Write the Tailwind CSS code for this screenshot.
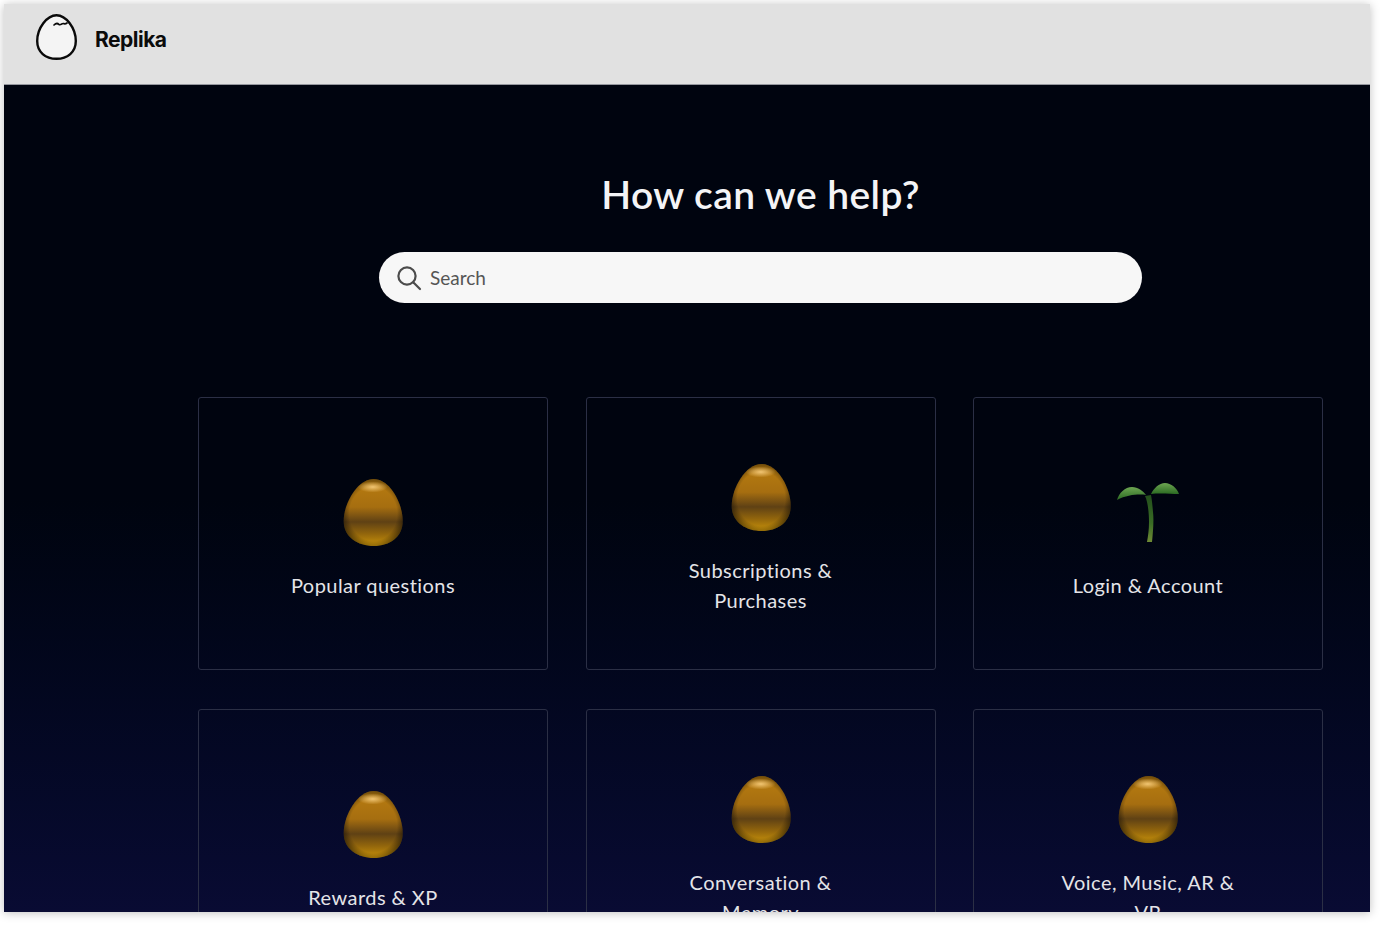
<!DOCTYPE html>
<html lang="en">
<head>
<meta charset="utf-8">
<title>Replika help</title>
<script src="https://cdn.jsdelivr.net/npm/@tailwindcss/browser@4"></script>
</head>
<body class="bg-white h-[925px] w-[1382px] overflow-hidden font-['Lato','Liberation_Sans',sans-serif]">
<div class="ml-1 mt-1 w-[1366px] h-[908px] overflow-hidden flex flex-col shadow-[0_1px_9px_rgba(0,0,0,0.25)]">
  <header class="h-[81px] shrink-0 bg-[#e1e1e1] flex items-center pl-8 pb-[11px] gap-[18px] border-b border-[#4a4d5c]/50">
    <svg class="w-[41px] h-[46px] -mt-[4px]" viewBox="0 0 41 46" fill="none">
      <path d="M20.5 1.2C30 1.2 39.8 14 39.8 27C39.8 38 31.5 44.8 20.5 44.8C9.5 44.8 1.2 38 1.2 27C1.2 14 11 1.2 20.500 1.2Z" fill="#f4f4f4" stroke="#0a0a0a" stroke-width="2.4"/>
      <path d="M18 11C20 9 21.500 9 23 10.500C24.500 11.500 26 9.500 27 9.500C28 9.500 29 10.500 31 9" stroke="#0a0a0a" stroke-width="1.7" stroke-linecap="round"/>
    </svg>
    <span class="mt-[1px] font-['Inter',sans-serif] font-bold text-[21px] leading-none tracking-[-0.5px] text-[#0b0b0b]">Replika</span>
  </header>
  <main class="flex-1 bg-gradient-to-b from-[#00040f] from-50% to-[#090b33] pl-[194px] pr-[47px] min-h-0">
    <h1 class="pt-[85px] text-center text-[39px] leading-[48px] font-semibold tracking-[0.42px] text-[#f4f4f6]">How can we help?</h1>
    <div class="mt-[34px] mx-auto w-[763px] h-[51px] rounded-full bg-[#f7f7f7] flex items-center pl-[17px] gap-[8px]">
      <svg class="w-[26px] h-[26px]" viewBox="0 0 26 26" fill="none" stroke="#4c4c4c" stroke-width="2.2" stroke-linecap="round">
        <circle cx="11" cy="11" r="8.6"/><path d="M17.5 17.5L24 24"/>
      </svg>
      <span class="text-[19px] leading-none text-[#555555]">Search</span>
    </div>
    <svg class="absolute w-0 h-0" aria-hidden="true">
      <defs>
        <linearGradient id="eggfill" x1="0" y1="0" x2="0" y2="1">
          <stop offset="0" stop-color="#b97d10"/>
          <stop offset="0.42" stop-color="#a66e10"/>
          <stop offset="0.64" stop-color="#5f4114"/>
          <stop offset="0.82" stop-color="#93660c"/>
          <stop offset="1" stop-color="#c9930a"/>
        </linearGradient>
        <radialGradient id="eggshade" cx="0.5" cy="0.52" r="0.56">
          <stop offset="0.72" stop-color="#000" stop-opacity="0"/>
          <stop offset="1" stop-color="#000" stop-opacity="0.55"/>
        </radialGradient>
        <radialGradient id="egglight" cx="0.5" cy="0.5" r="0.5">
          <stop offset="0" stop-color="#f3c877" stop-opacity="0.95"/>
          <stop offset="1" stop-color="#f3c877" stop-opacity="0"/>
        </radialGradient>
        <linearGradient id="leaf" x1="0" y1="0" x2="0" y2="1">
          <stop offset="0" stop-color="#6da552"/>
          <stop offset="1" stop-color="#2b6b22"/>
        </linearGradient>
        <linearGradient id="stem" x1="0" y1="0" x2="0" y2="1">
          <stop offset="0" stop-color="#234f1c"/>
          <stop offset="0.6" stop-color="#3a6c25"/>
          <stop offset="1" stop-color="#6f8a35"/>
        </linearGradient>
        <g id="egg" transform="translate(0.7 0)">
          <path d="M30 13C46 13 59 37 59 55C59 71 46 80 30 80C14 80 0 71 0 55C0 37 14 13 30 13Z" fill="url(#eggfill)"/>
          <path d="M30 13C46 13 59 37 59 55C59 71 46 80 30 80C14 80 0 71 0 55C0 37 14 13 30 13Z" fill="url(#eggshade)"/>
          <ellipse cx="29" cy="21" rx="15" ry="5.500" fill="url(#egglight)"/>
        </g>
      </defs>
    </svg>
    <div class="mt-[94px] grid grid-cols-3 gap-x-[37.5px] gap-y-[39px]">
      <a class="h-[273px] border border-[#2b2f45] rounded-[3px] flex flex-col items-center justify-center text-center">
        <svg class="w-[60px] h-[80px]" viewBox="0 0 60 80"><use href="#egg"/></svg>
        <p class="mt-[24px] mb-px text-[20px] leading-[30px] tracking-[0.45px] text-[#e4e4e8] w-[270px]">Popular questions</p>
      </a>
      <a class="h-[273px] border border-[#2b2f45] rounded-[3px] flex flex-col items-center justify-center text-center">
        <svg class="w-[60px] h-[80px]" viewBox="0 0 60 80"><use href="#egg"/></svg>
        <p class="mt-[24px] mb-px text-[20px] leading-[30px] tracking-[0.45px] text-[#e4e4e8] w-[190px]">Subscriptions &amp; Purchases</p>
      </a>
      <a class="h-[273px] border border-[#2b2f45] rounded-[3px] flex flex-col items-center justify-center text-center">
        <svg class="w-[64px] h-[80px]" viewBox="0 0 64 80" fill="none">
          <path d="M29 30C32 36 33 48 33 56C33 64 32 70 31 76L36 76C37 66 38 54 37 46C36.500 40 36 34 35 29Z" fill="url(#stem)"/>
          <path d="M1 34C3 27 9 21 16 21C22 21 27 25 30 29C25 28 12 28 1 34Z" fill="url(#leaf)"/>
          <path d="M35 28C38 22 43 17 49 17C55 17 61 22 63 28C55 28 44 27 35 28Z" fill="url(#leaf)"/>
        </svg>
        <p class="mt-[24px] mb-px text-[20px] leading-[30px] tracking-[0.45px] text-[#e4e4e8] w-[270px]">Login &amp; Account</p>
      </a>
      <a class="h-[273px] border border-[#2b2f45] rounded-[3px] flex flex-col items-center justify-center text-center">
        <svg class="w-[60px] h-[80px]" viewBox="0 0 60 80"><use href="#egg"/></svg>
        <p class="mt-[24px] mb-px text-[20px] leading-[30px] tracking-[0.45px] text-[#e4e4e8] w-[270px]">Rewards &amp; XP</p>
      </a>
      <a class="h-[273px] border border-[#2b2f45] rounded-[3px] flex flex-col items-center justify-center text-center">
        <svg class="w-[60px] h-[80px]" viewBox="0 0 60 80"><use href="#egg"/></svg>
        <p class="mt-[24px] mb-px text-[20px] leading-[30px] tracking-[0.45px] text-[#e4e4e8] w-[190px]">Conversation &amp; Memory</p>
      </a>
      <a class="h-[273px] border border-[#2b2f45] rounded-[3px] flex flex-col items-center justify-center text-center">
        <svg class="w-[60px] h-[80px]" viewBox="0 0 60 80"><use href="#egg"/></svg>
        <p class="mt-[24px] mb-px text-[20px] leading-[30px] tracking-[0.45px] text-[#e4e4e8] w-[190px]">Voice, Music, AR &amp; VR</p>
      </a>
    </div>
  </main>
</div>
</body>
</html>
